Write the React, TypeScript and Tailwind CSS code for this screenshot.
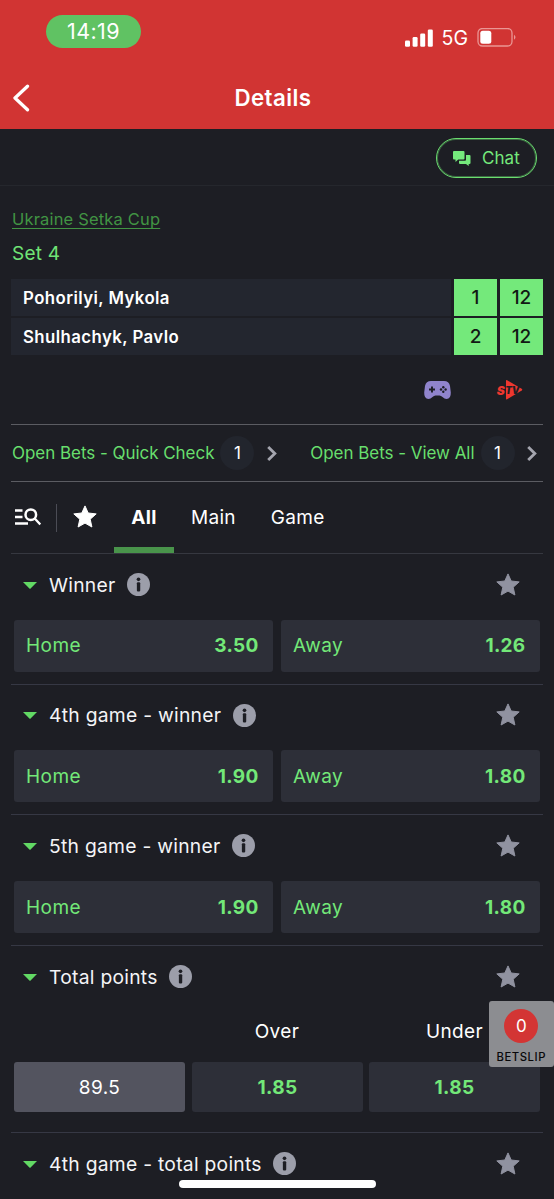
import React from "react";

const STAR = "M12 0.900L15.200 8L23.200 8.900L17.200 14.200L18.900 22L12 18.100L5.100 22L6.800 14.200L0.800 8.900L8.800 8Z";

function Star({ className }: { className: string }) {
  return (
    <svg viewBox="0 0 24 24" className={className} fill="currentColor" stroke="currentColor" strokeWidth="1" strokeLinejoin="round">
      <path d={STAR} />
    </svg>
  );
}

function Info() {
  return (
    <svg viewBox="0 0 24 24" className="size-[23px] shrink-0">
      <circle cx="12" cy="12" r="12" fill="#9c9eaa" />
      <circle cx="12" cy="6.600" r="1.900" fill="#1d1e24" />
      <rect x="10.300" y="9.600" width="3.500" height="9.800" rx="1.200" fill="#1d1e24" />
    </svg>
  );
}

function MarketHeader({ title }: { title: string }) {
  return (
    <div className="flex h-[61px] shrink-0 items-center pl-3 pr-[23px]">
      <svg viewBox="0 0 14 7" className="mt-px h-[7px] w-[14px]">
        <path d="M0 0h14L7.600 6.600q-.6.5-1.200 0z" fill="#62d964" />
      </svg>
      <span className="ml-3 text-[19.300px] leading-6 tracking-[0.260px] text-[#f4f4f6]">{title}</span>
      <span className="ml-[11.500px] flex">
        <Info />
      </span>
      <Star className="ml-auto size-[24px] text-[#9092a0]" />
    </div>
  );
}

function Odd({ label, value }: { label: string; value: string }) {
  return (
    <div className="flex h-[52px] flex-1 items-center justify-between rounded-[3px] bg-[#2d2f38] pl-3 pr-[14.500px] pt-[2px] text-[#73e878]">
      <span className="text-[19px] tracking-[0.450px]">{label}</span>
      <span className="text-[19px] font-bold tracking-[0.300px]">{value}</span>
    </div>
  );
}

function Market({ title, home, away }: { title: string; home: string; away: string }) {
  return (
    <section className="h-[130.700px] border-b border-[#363844]">
      <MarketHeader title={title} />
      <div className="flex gap-2 px-[3px] pt-[4.500px]">
        <Odd label="Home" value={home} />
        <Odd label="Away" value={away} />
      </div>
    </section>
  );
}

function Player({ name, games, points }: { name: string; games: string; points: string }) {
  return (
    <div className="flex h-[37px] items-stretch gap-[3px] text-[#111a14]">
      <div className="flex w-[440px] items-center bg-[#23262f] pl-3 pt-[2px] text-[16.800px] font-semibold tracking-[0.430px] text-white">{name}</div>
      <div className="flex w-[43px] items-center justify-center bg-[#74e97b] pt-[2px] text-[19px] font-medium">{games}</div>
      <div className="flex w-[43px] items-center justify-center bg-[#74e97b] pt-[2px] text-[19px] font-medium">{points}</div>
    </div>
  );
}

function Chevron() {
  return (
    <svg viewBox="0 0 12 18" className="h-[17px] w-[12px]" fill="none" stroke="#a4a5ae" strokeWidth="3">
      <path d="M2 2l7 7-7 7" />
    </svg>
  );
}

function OpenBets({ label }: { label: string }) {
  return (
    <div className="flex items-center">
      <span className="pt-[2px] text-[17px] tracking-[-0.040px] text-[#68df6d]">{label}</span>
      <span className="ml-[6px] flex size-[34px] items-center justify-center rounded-full bg-[#22252d] pt-px text-[17px] text-white">1</span>
      <span className="ml-[11.500px]">
        <Chevron />
      </span>
    </div>
  );
}

export default function App() {
  return (
    <div className="relative flex h-[1199px] w-[554px] flex-col overflow-hidden bg-[#1d1e24] font-['Inter',sans-serif] whitespace-nowrap">
      <header className="h-[129px] shrink-0 bg-[#d13433] text-white">
        <div className="flex h-[66px] items-start justify-between pl-[46px] pr-[37px] pt-[15px]">
          <div className="flex h-[33px] w-[95px] items-center justify-center rounded-full bg-[#60c263] text-[21.500px] tracking-[0.400px]">14:19</div>
          <div className="flex h-[45px] items-center">
            <svg viewBox="0 0 28 18" className="h-[18px] w-[28px]" fill="#fff">
              <rect x="0" y="11.500" width="5" height="6.200" rx="1.300" />
              <rect x="7.600" y="8" width="5" height="9.700" rx="1.300" />
              <rect x="15.200" y="4.500" width="5" height="13.200" rx="1.300" />
              <rect x="22.800" y="0.500" width="5" height="17.200" rx="1.300" />
            </svg>
            <span className="ml-[9px] pt-[2px] text-[19.500px]">5G</span>
            <svg viewBox="0 0 40 20" className="ml-[9px] h-[20px] w-[40px]">
              <rect x="1" y="0.500" width="34" height="17.500" rx="4.500" fill="none" stroke="#ea9694" strokeWidth="1.300" />
              <rect x="3.300" y="2.700" width="11" height="13" rx="2.500" fill="#fff" />
              <path d="M37 6.700q3 2.400 0 5z" fill="#ea9694" />
            </svg>
          </div>
        </div>
        <div className="grid h-[63px] grid-cols-[1fr_auto_1fr] items-center px-3">
          <svg viewBox="0 0 18 28" className="h-[28px] w-[18px]" fill="none" stroke="#fff" strokeWidth="3.300" strokeLinecap="round" strokeLinejoin="round">
            <path d="M15.500 2.200L3 14l12.500 11.800" />
          </svg>
          <h1 className="-ml-2 pt-px text-[22.300px] font-semibold tracking-[0.450px]">Details</h1>
        </div>
      </header>

      <div className="flex h-[57px] shrink-0 items-center justify-end border-b border-[#25272d] pr-[17px] pt-[2px]">
        <div className="flex h-[40px] w-[101px] items-center rounded-full border-[1.500px] border-[#6bdd70] pl-4 text-[#75e97c] ring-1 ring-inset ring-[#6bdd70]/40">
          <svg viewBox="0 0 18 15" className="h-[15px] w-[18px]" fill="currentColor">
            <path d="M1 0h9.500q1 0 1 1v6.500q0 1-1 1H5.200L2.500 11V8.500H1q-1 0-1-1V1q0-1 1-1z" />
            <path d="M13 4h3.500q1 0 1 1v7q0 1-1 1h-.8v2l-2.700-2H7q-1 0-1-1v-2.200h6q1 0 1-1z" />
          </svg>
          <span className="ml-[11px] pt-px text-[17px] tracking-[0.050px]">Chat</span>
        </div>
      </div>

      <main className="flex flex-col pl-[11px] pr-[11px]">
        <section className="h-[238px] pt-[21px]">
          <a className="block pl-px text-[16.500px] leading-6 tracking-[0.170px] text-[#419443] underline decoration-1 underline-offset-[3px]">Ukraine Setka Cup</a>
          <div className="mt-[11px] pl-px text-[19px] leading-6 tracking-[0.200px] text-[#70e476]">Set 4</div>
          <div className="mt-[13px] flex flex-col gap-[2px]">
            <Player name="Pohorilyi, Mykola" games="1" points="12" />
            <Player name="Shulhachyk, Pavlo" games="2" points="12" />
          </div>
          <div className="flex h-[69px] items-center justify-end gap-[46px] pr-[20px]">
            <svg viewBox="0 0 27 18" className="h-[18px] w-[27px]">
              <path d="M7 0h13q5 0 6 5l.8 6.500Q27 18 22.500 18q-2 0-4-2-1.500-1.600-3-1.600h-4q-1.500 0-3 1.600-2 2-4 2Q0 18 .2 11.500L1 5Q2 0 7 0z" fill="#9084cc" />
              <path d="M8 5.500v6M5 8.500h6" stroke="#1d1e24" strokeWidth="1.900" />
              <g fill="#1d1e24">
                <circle cx="19.300" cy="6.200" r="1.200" />
                <circle cx="19.300" cy="10.800" r="1.200" />
                <circle cx="17" cy="8.500" r="1.200" />
                <circle cx="21.600" cy="8.500" r="1.200" />
              </g>
            </svg>
            <svg viewBox="0 0 26 20" className="h-[20px] w-[26px] overflow-visible font-['Inter',sans-serif] font-black italic">
              <path d="M9 1q0-1.300 1.200-.7l14.500 8.500q1.200.8 0 1.600L10.200 19.200q-1.200.6-1.200-.8z" fill="#ee372f" />
              <text x="-0.200" y="14.800" fontSize="12" fill="#ee372f">S</text>
              <text x="8.300" y="13.800" fontSize="9.800" fill="#1d1e24" letterSpacing="-0.300">TV</text>
            </svg>
          </div>
        </section>

        <div className="flex h-[58px] items-center justify-between border-y border-[#5b5c62] pl-px pr-[5px]">
          <OpenBets label="Open Bets - Quick Check" />
          <OpenBets label="Open Bets - View All" />
        </div>

        <nav className="flex h-[72px] items-stretch border-b border-[#363840] text-[19px] tracking-[0.300px] text-white">
          <div className="flex w-[103px] items-center pl-1">
            <svg viewBox="0 0 26 18" className="mb-px h-[18px] w-[26px]" fill="none" stroke="#fff" strokeWidth="2.300">
              <path d="M0 2.500h7.500M0 9h7.500M0 15.500h13M19.500 10.300L25.300 16.500" />
              <circle cx="15.800" cy="6.700" r="5.300" strokeWidth="2.500" />
            </svg>
            <div className="ml-[15px] h-7 w-px bg-[#4b4c55]" />
            <Star className="mb-px ml-4 size-[24px] shrink-0" />
          </div>
          <div className="flex w-[60px] items-center justify-center border-b-[6px] border-[#49944b] pt-[7px] font-bold">All</div>
          <div className="flex items-center pl-[17px] pt-[2px]">Main</div>
          <div className="flex items-center pl-[35px] pt-[2px]">Game</div>
        </nav>

        <Market title="Winner" home="3.50" away="1.26" />
        <Market title="4th game - winner" home="1.90" away="1.80" />
        <Market title="5th game - winner" home="1.90" away="1.80" />

        <section className="h-[187px] border-b border-[#363844]">
          <MarketHeader title="Total points" />
          <div className="grid grid-cols-3 gap-x-[6.500px] px-[3px] text-center text-[19px] tracking-[0.400px] text-white">
            <span />
            <span className="flex h-[50px] items-center justify-center pt-px">Over</span>
            <span className="flex h-[50px] items-center justify-center pt-px">Under</span>
            <span className="mt-[5px] flex h-[50px] items-center justify-center rounded-[3px] bg-[#53545f] pt-[2px]">89.5</span>
            <span className="mt-[5px] flex h-[50px] items-center justify-center rounded-[3px] bg-[#2d2f38] pl-px pt-[2px] font-bold text-[#73e878]">1.85</span>
            <span className="mt-[5px] flex h-[50px] items-center justify-center rounded-[3px] bg-[#2d2f38] pt-[2px] font-bold text-[#73e878]">1.85</span>
          </div>
        </section>
        <MarketHeader title="4th game - total points" />
      </main>

      <div className="absolute left-[488.500px] top-[1000.500px] flex h-[66.500px] w-[65.500px] flex-col items-center rounded-[3px] bg-[#8c8d91] pt-[8.500px]">
        <div className="flex size-[34px] items-center justify-center rounded-full bg-[#d33534] pt-px text-[17px] text-white">0</div>
        <span className="mt-[6px] text-[11.300px] leading-4 font-medium tracking-[0.550px] text-[#08080a]">BETSLIP</span>
      </div>
      <div className="absolute left-[178.500px] top-[1180px] h-2 w-[197.500px] rounded-full bg-white" />
    </div>
  );
}
